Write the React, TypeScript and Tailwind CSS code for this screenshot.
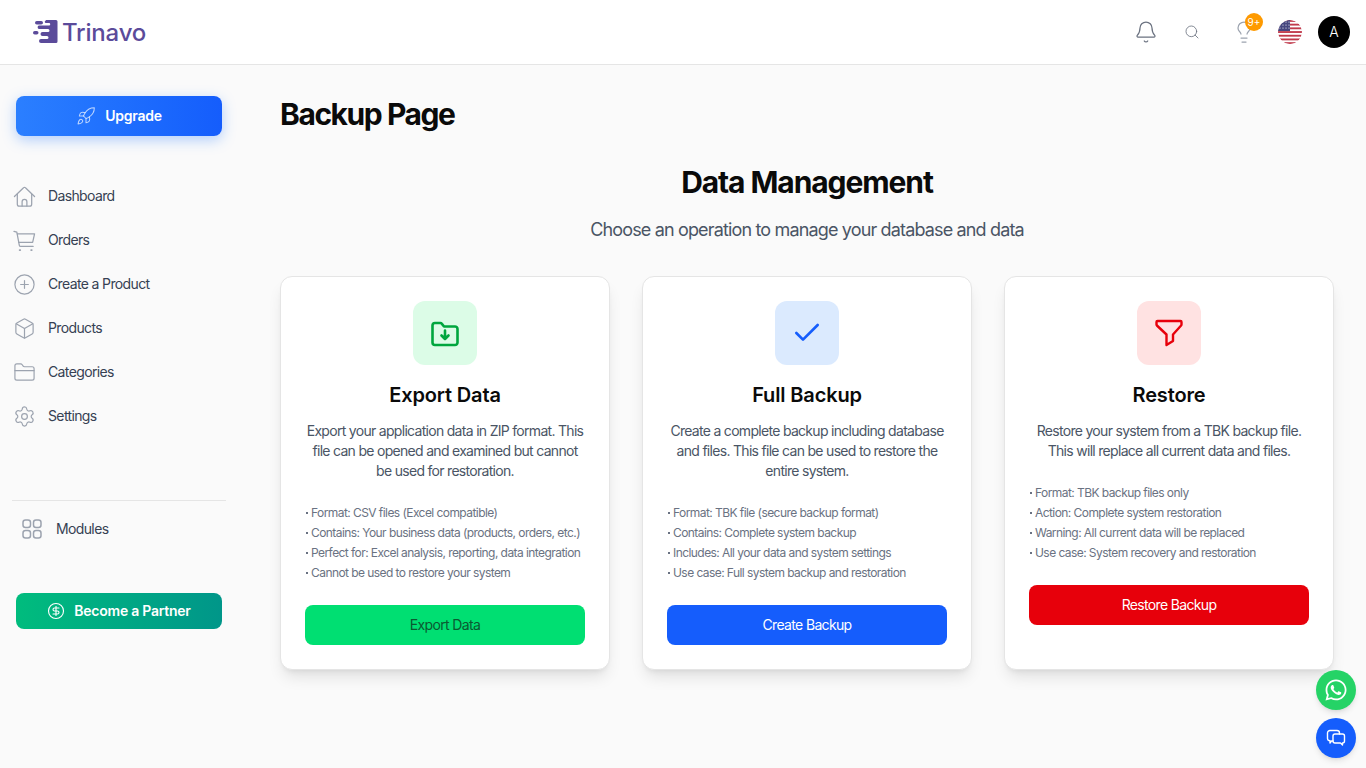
import { Bell, Box, Check, CircleDollarSign, CirclePlus, FolderClosed, Lightbulb, Rocket, Search, Settings } from "lucide-react";
import { FaWhatsapp } from "react-icons/fa";

function HomeIcon({ className }: { className?: string }) {
  return (
    <svg viewBox="0 0 24 24" fill="none" stroke="currentColor" strokeWidth="1.300" strokeLinecap="round" strokeLinejoin="round" className={className}>
      <path d="M1.500 12 11 2.800a1.400 1.400 0 0 1 2 0l9.500 9.200" />
      <path d="M4.500 9.500V20a2 2 0 0 0 2 2h11a2 2 0 0 0 2-2V9.500" />
      <path d="M9.500 22v-4.500a2.500 2.500 0 0 1 5 0V22" />
    </svg>
  );
}

function CartIcon({ className }: { className?: string }) {
  return (
    <svg viewBox="0 0 24 24" fill="none" stroke="currentColor" strokeWidth="1.300" strokeLinecap="round" strokeLinejoin="round" className={className}>
      <path d="M1 2.500l3 .8 2.600 13.700a1.500 1.500 0 0 0 1.500 1.200H21" />
      <path d="M4.500 5H22.500l-2 9H6" />
      <path d="M7 22h.5M19 22h.5" strokeWidth="2" />
    </svg>
  );
}

function ExportIcon() {
  return (
    <svg viewBox="0 0 32 32" fill="none" stroke="currentColor" strokeWidth="2.600" strokeLinecap="round" strokeLinejoin="round" className="w-8 h-8 text-[#00a63e]">
      <path d="M6 6h5.500a1.500 1.500 0 0 1 1.200.6L15 9.500h11a2.500 2.500 0 0 1 2.500 2.500v13.500A2.500 2.500 0 0 1 26 28H6a2.500 2.500 0 0 1-2.500-2.500v-17A2.500 2.500 0 0 1 6 6z" />
      <path d="M16 13.500v8.500M12.500 18.500l3.500 3.500 3.500-3.500" />
    </svg>
  );
}

function RestoreIcon() {
  return (
    <svg viewBox="0 0 32 32" fill="none" stroke="currentColor" strokeWidth="2.400" strokeLinecap="round" strokeLinejoin="round" className="w-8 h-8 text-[#e7000b]">
      <path d="M4.500 4h23a1 1 0 0 1 1 1v2.500a1.500 1.500 0 0 1-.4 1L20 17.500v6.500l-6.500 4V17.500L3.900 8.500a1.500 1.500 0 0 1-.4-1V5a1 1 0 0 1 1-1z" />
    </svg>
  );
}

const navItems = [
  { label: "Dashboard", icon: HomeIcon },
  { label: "Orders", icon: CartIcon },
  { label: "Create a Product", icon: CirclePlus },
  { label: "Products", icon: Box },
  { label: "Categories", icon: FolderClosed },
  { label: "Settings", icon: Settings },
];

const cards = [
  {
    title: "Export Data",
    icon: <ExportIcon />,
    iconBg: "bg-[#dcfce7]",
    text: "Export your application data in ZIP format. This file can be opened and examined but cannot be used for restoration.",
    points: [
      "Format: CSV files (Excel compatible)",
      "Contains: Your business data (products, orders, etc.)",
      "Perfect for: Excel analysis, reporting, data integration",
      "Cannot be used to restore your system",
    ],
    button: "Export Data",
    buttonClass: "bg-[#00df72] text-[#0b5a31]",
  },
  {
    title: "Full Backup",
    icon: <Check className="w-8 h-8 text-[#155dfc]" />,
    iconBg: "bg-[#dbeafe]",
    text: "Create a complete backup including database and files. This file can be used to restore the entire system.",
    points: [
      "Format: TBK file (secure backup format)",
      "Contains: Complete system backup",
      "Includes: All your data and system settings",
      "Use case: Full system backup and restoration",
    ],
    button: "Create Backup",
    buttonClass: "bg-[#155dfc] text-white",
  },
  {
    title: "Restore",
    icon: <RestoreIcon />,
    iconBg: "bg-[#ffe2e2]",
    text: "Restore your system from a TBK backup file. This will replace all current data and files.",
    points: [
      "Format: TBK backup files only",
      "Action: Complete system restoration",
      "Warning: All current data will be replaced",
      "Use case: System recovery and restoration",
    ],
    button: "Restore Backup",
    buttonClass: "bg-[#e7000b] text-white",
  },
];

function Logo() {
  return (
    <div className="flex items-center gap-[4px]">
      <svg width="25" height="24" viewBox="0 0 25 24" fill="#5b4b9a">
        <rect x="2" y="1" width="8" height="3.500" rx="1.750" />
        <path d="M13 0h10a1.500 1.500 0 0 1 1.500 1.500v20a1.500 1.500 0 0 1-1.500 1.500H8a2 2 0 0 1 0-4h6a1.500 1.500 0 0 0 0-3H9.500a2 2 0 0 1 0-4H15a1.500 1.500 0 0 0 0-3H6a1.800 1.800 0 0 1 0-3.500h10a1.200 1.200 0 0 0 0-2.500h-3a1.200 1.200 0 0 1 0-2.500z" />
        <rect x="0" y="11" width="5.500" height="3.500" rx="1.750" />
      </svg>
      <span className="text-[24px] leading-none font-medium tracking-[-0.2px] text-[#5b4b9a] mt-px">Trinavo</span>
    </div>
  );
}

function Flag() {
  return (
    <svg width="24" height="24" viewBox="0 0 24 24" className="rounded-full">
      <defs>
        <clipPath id="flag-circle">
          <circle cx="12" cy="12" r="12" />
        </clipPath>
      </defs>
      <g clipPath="url(#flag-circle)">
        <rect width="24" height="24" fill="#fff" />
        {[0, 3.7, 7.4, 11.1, 14.8, 18.5, 22.2].map((y) => (
          <rect key={y} y={y} width="24" height="1.850" fill="#c0394b" />
        ))}
        <rect width="12" height="11" fill="#46467f" />
        {[2, 5, 8].map((y) =>
          [2, 5, 8, 11].map((x) => <circle key={`${x}-${y}`} cx={x} cy={y} r="0.6" fill="#fff" />)
        )}
      </g>
    </svg>
  );
}

export default function App() {
  return (
    <div className="h-screen overflow-hidden bg-[#fafafa] font-['Inter',sans-serif] text-[#0a0a0a]">
      <header className="h-[65px] bg-white border-b border-[#e5e5e5] flex items-center justify-between pl-[33px] pr-4">
        <Logo />
        <div className="flex items-center">
          <Bell className="w-6 h-6 text-[#6b7280] mr-[26px]" strokeWidth={1.250} />
          <Search className="w-4 h-4 text-[#6b7280] mr-[32px]" strokeWidth={1.250} />
          <div className="relative mr-[22px]">
            <Lightbulb className="w-6 h-6 text-[#9ca3af]" strokeWidth={1.250} />
            <span className="absolute -top-[7px] left-[13px] w-[18px] h-[18px] rounded-full bg-[#fe9a00] text-white text-[10px] flex items-center justify-center">9+</span>
          </div>
          <div className="mr-[16px] flex">
            <Flag />
          </div>
          <div className="w-8 h-8 rounded-full bg-black text-white text-sm font-light flex items-center justify-center">A</div>
        </div>
      </header>

      <div className="flex">
        <aside className="w-[248px] shrink-0 pt-[31px] pl-3">
          <button className="ml-1 w-[206px] h-10 rounded-lg bg-gradient-to-r from-[#2b7fff] to-[#155dfc] text-white text-sm font-semibold tracking-[-0.25px] flex items-center justify-center gap-[9px] shadow-[0_4px_14px_rgba(43,127,255,0.35)]">
            <Rocket className="w-5 h-5 text-white/70" strokeWidth={1.250} />
            Upgrade
          </button>

          <nav className="mt-[38px] flex flex-col">
            {navItems.map(({ label, icon: Icon }) => (
              <div key={label} className="h-11 pl-px flex items-center gap-[12px] text-sm tracking-[-0.045em] text-[#364153]">
                <Icon className="w-[23px] h-[23px] text-[#9ca3af]" strokeWidth={1.250} />
                {label}
              </div>
            ))}
          </nav>

          <div className="mt-[62px] w-[214px] border-t border-[#e5e5e5] pt-[6px]">
            <div className="h-11 pl-[10px] flex items-center gap-[14px] text-sm tracking-[-0.045em] text-[#364153]">
              <svg width="20" height="20" viewBox="0 0 20 20" fill="none" stroke="#9ca3af" strokeWidth="1.500">
                <rect x="1" y="1" width="7.500" height="7.500" rx="2.500" />
                <rect x="11.500" y="1" width="7.500" height="7.500" rx="2.500" />
                <rect x="1" y="11.500" width="7.500" height="7.500" rx="2.500" />
                <rect x="11.500" y="11.500" width="7.500" height="7.500" rx="2.500" />
              </svg>
              Modules
            </div>
          </div>

          <button className="mt-[42px] ml-1 w-[206px] h-9 rounded-lg bg-gradient-to-r from-[#00bc7d] to-[#009689] text-white text-sm font-semibold tracking-[-0.25px] flex items-center justify-center gap-[9px]">
            <CircleDollarSign className="w-[18px] h-[18px]" strokeWidth={1.500} />
            Become a Partner
          </button>
        </aside>

        <main className="flex-1 px-8 pt-[31px]">
          <h1 className="text-3xl leading-9 font-bold tracking-[-0.048em]">Backup Page</h1>

          <div className="mt-[32px] text-center">
            <h2 className="text-3xl leading-9 font-bold tracking-[-0.036em]">Data Management</h2>
            <p className="mt-[16px] text-lg leading-7 tracking-[-0.047em] text-[#4a5565]">Choose an operation to manage your database and data</p>
          </div>

          <div className="mt-[32px] grid grid-cols-3 gap-8">
            {cards.map((card) => (
              <div key={card.title} className="bg-white border border-[#e5e5e5] rounded-xl p-6 shadow-lg flex flex-col">
                <div className={`w-16 h-16 shrink-0 rounded-xl mx-auto flex items-center justify-center ${card.iconBg}`}>{card.icon}</div>
                <h3 className="mt-4 text-xl leading-7 font-semibold tracking-[-0.15px] text-center">{card.title}</h3>
                <p className="mt-[12px] text-sm leading-5 tracking-[-0.05em] text-center text-[#4a5565]">{card.text}</p>
                <ul className="mt-[22px] text-xs leading-5 tracking-[-0.047em] text-[#6a7282]">
                  {card.points.map((point) => (
                    <li key={point} className="flex items-center gap-[3px] whitespace-nowrap">
                      <span className="ml-px w-[2px] h-[2px] shrink-0 bg-[#6a7282]" />
                      {point}
                    </li>
                  ))}
                </ul>
                <button className={`mt-[22px] h-10 shrink-0 rounded-lg text-sm tracking-[-0.047em] ${card.buttonClass}`}>{card.button}</button>
              </div>
            ))}
          </div>
        </main>
      </div>

      <div className="fixed right-[10px] bottom-[10px] flex flex-col gap-[8px]">
        <div className="w-10 h-10 rounded-full bg-[#25d366] text-white flex items-center justify-center shadow-md">
          <FaWhatsapp className="w-6 h-6" />
        </div>
        <div className="w-10 h-10 rounded-full bg-[#155dfc] text-white flex items-center justify-center shadow-md">
          <svg width="20" height="20" viewBox="0 0 20 20" fill="none" stroke="currentColor" strokeWidth="1.400" strokeLinejoin="round" strokeLinecap="round">
            <path d="M7 13H5.500L4 15v-2.200A2.500 2.500 0 0 1 1.500 10.500V5A2.500 2.500 0 0 1 4 2.500h7A2.500 2.500 0 0 1 13.500 5v1" />
            <path d="M9 6h7.500A2 2 0 0 1 18.500 8v5a2 2 0 0 1-2 2v2l-2-2H9a2 2 0 0 1-2-2V8a2 2 0 0 1 2-2z" />
          </svg>
        </div>
      </div>
    </div>
  );
}
